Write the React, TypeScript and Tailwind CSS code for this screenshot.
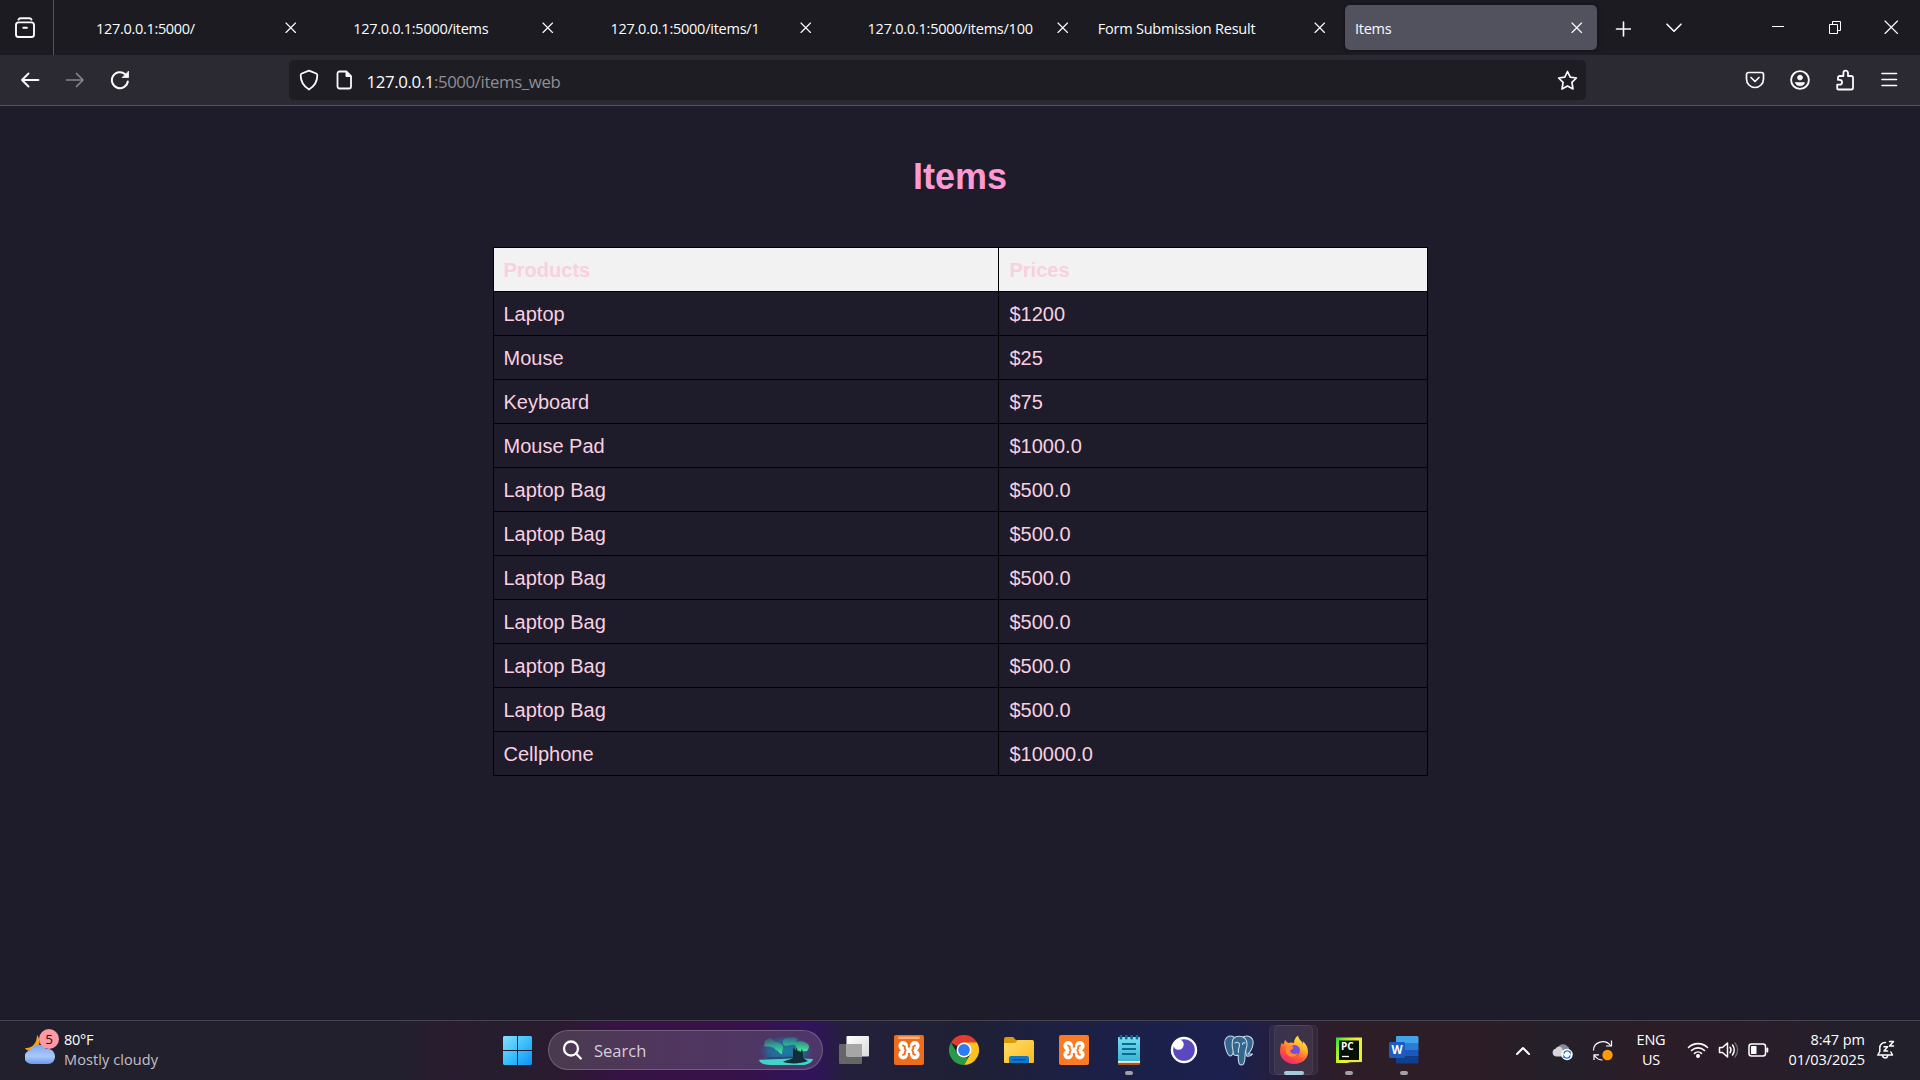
import type { ReactNode } from "react";

const tabs = [
  { title: "127.0.0.1:5000/", indent: true, tracking: "tracking-[-0.31px]" },
  { title: "127.0.0.1:5000/items", indent: true, tracking: "tracking-[-0.28px]" },
  { title: "127.0.0.1:5000/items/1", indent: true, tracking: "tracking-[-0.24px]" },
  { title: "127.0.0.1:5000/items/100", indent: true, tracking: "tracking-[-0.24px]" },
  { title: "Form Submission Result", indent: false, tracking: "tracking-[-0.23px]" },
  { title: "Items", indent: false, active: true, tracking: "tracking-[-0.25px]" },
];

const rows = [
  ["Laptop", "$1200"],
  ["Mouse", "$25"],
  ["Keyboard", "$75"],
  ["Mouse Pad", "$1000.0"],
  ["Laptop Bag", "$500.0"],
  ["Laptop Bag", "$500.0"],
  ["Laptop Bag", "$500.0"],
  ["Laptop Bag", "$500.0"],
  ["Laptop Bag", "$500.0"],
  ["Laptop Bag", "$500.0"],
  ["Cellphone", "$10000.0"],
];

function Glyph({ w = 20, h = 20, sw = 1.6, children }: { w?: number; h?: number; sw?: number; children: ReactNode }) {
  return (
    <svg width={w} height={h} viewBox={`0 0 ${w} ${h}`} fill="none" stroke="currentColor" strokeWidth={sw} strokeLinecap="round" strokeLinejoin="round" className="shrink-0">
      {children}
    </svg>
  );
}

const Cross = ({ s = 9.5 }: { s?: number }) => (
  <Glyph w={s + 2} h={s + 2} sw={1.15}>
    <path d={`M1 1L${s + 1} ${s + 1}M${s + 1} 1L1 ${s + 1}`} />
  </Glyph>
);

function TabStrip() {
  return (
    <div className="flex h-[55px] bg-[#1c1b22]">
      <div className="flex w-[54px] items-center border-r border-[#55545c] pl-[14px] pt-[1px]">
        <Glyph w={22} h={22} sw={1.9}>
          <path d="M4.5 2.6C5 1.6 5.5 1.3 6.5 1.3h9c1 0 1.5.3 2 1.3" />
          <rect x="2" y="5.4" width="18" height="14.6" rx="2.6" />
          <path d="M9.3 10.8h3.6" />
        </Glyph>
      </div>
      <div className="flex pl-[5px] pt-[5px]">
        {tabs.map((t) => (
          <div key={t.title} className="flex w-[257.2px] pr-[5px]">
            <div className={`flex h-[45px] w-full items-center justify-between rounded-[5px] pr-[14.5px] ${t.indent ? "pl-[37px]" : "pl-[10px]"} ${t.active ? "bg-[#52525e] shadow-[0_0_4px_rgba(0,0,0,0.5)]" : ""}`}>
              <span className={`whitespace-nowrap pt-[2px] text-[14.5px] leading-5 ${t.tracking}`}>{t.title}</span>
              <Cross />
            </div>
          </div>
        ))}
      </div>
      <div className="flex flex-1 items-center text-[#fbfbfe]">
        <div className="ml-[13px] mt-[2px]">
          <Glyph w={16} h={16} sw={1.6}><path d="M8.5 1v14M1.500 8h14" /></Glyph>
        </div>
        <div className="ml-[35px]">
          <Glyph w={16} h={10} sw={1.6}><path d="M1 1.2l7 7 7-7" /></Glyph>
        </div>
        <div className="ml-[90px] h-[1px] w-[12px] -translate-y-[1px] bg-white" />
        <div className="ml-[45px]">
          <svg width="13" height="13" fill="none" stroke="#fff" strokeWidth="1">
            <path d="M.5 3.500h8v9h-8zM3.500 3.500v-3h8v9h-3" />
          </svg>
        </div>
        <div className="ml-[42px]"><Cross s={12.5} /></div>
      </div>
    </div>
  );
}

function Toolbar() {
  return (
    <div className="flex h-[51px] items-center border-b border-[#55535f] bg-[#2b2a33] text-[#fbfbfe]">
      <div className="flex w-[289px] items-center gap-[25px] pl-[20px]">
        <Glyph w={20} h={18} sw={1.9}><path d="M18.5 9H2M8.5 2.5L2 9l6.500 6.500" /></Glyph>
        <div className="text-[#85848b]">
          <Glyph w={20} h={18} sw={1.7}><path d="M1.500 9H18M11.500 2.500L18 9l-6.500 6.500" /></Glyph>
        </div>
        <Glyph w={20} h={20} sw={2}>
          <path d="M17.800 11.500a8 8 0 1 1-2.600-7.300" />
          <path d="M18.500 1.500v6h-6z" fill="currentColor" strokeWidth="0.8" />
        </Glyph>
      </div>
      <div className="flex h-[40px] w-[1297px] items-center rounded-[5px] bg-[#1e1d24] pl-[10px]">
        <Glyph w={20} h={22} sw={1.8}>
          <path d="M10 1.600l7.200 2.900c.9.400 1.100.9 1.100 1.800 0 6.500-2.700 10.900-8.300 14.200C4.400 17.200 1.700 12.800 1.700 6.300c0-.9.200-1.400 1.100-1.800z" />
        </Glyph>
        <div className="ml-[17px]">
          <Glyph w={16} h={20} sw={1.8}>
            <path d="M3.500 1.500h6.800l4.700 4.700v10.300a2 2 0 0 1-2 2H3.500a2 2 0 0 1-2-2v-13a2 2 0 0 1 2-2z" />
            <path d="M10 1.500v5h5z" fill="currentColor" strokeWidth="1" />
          </Glyph>
        </div>
        <span className="ml-[14.500px] flex-1 pt-[4px] text-[16.800px] leading-5 tracking-[-0.38px]">
          127.0.0.1<span className="text-[#8f8e95]">:5000/items_web</span>
        </span>
        <div className="mr-[8.500px]">
          <Glyph w={21} h={21} sw={1.7}>
            <path d="M10.500 1.500l2.700 5.700 6.200.8-4.500 4.400 1.100 6.600-5.500-3-5.500 3 1.100-6.600L1.600 8l6.200-.8z" />
          </Glyph>
        </div>
      </div>
      <div className="ml-[159px] flex items-center gap-[25px]">
        <Glyph w={20} h={20} sw={1.7}>
          <path d="M3.500 2.500h13a2 2 0 0 1 2 2V9a8.500 8.500 0 0 1-17 0V4.500a2 2 0 0 1 2-2zM6 7.500l4 4 4-4" />
        </Glyph>
        <Glyph w={20} h={20} sw={1.9}>
          <circle cx="10" cy="10" r="8.900" />
          <circle cx="10" cy="7.600" r="2.500" fill="currentColor" strokeWidth="0.6" />
          <path d="M5.500 12.500h9c0 2-2 3.300-4.500 3.300s-4.500-1.300-4.500-3.300z" fill="currentColor" strokeWidth="0.6" />
        </Glyph>
        <Glyph w={20} h={22} sw={1.8}>
          <path d="M3.500 20.500h12.800a1.700 1.700 0 0 0 1.700-1.700V8.700A1.700 1.700 0 0 0 16.300 7H13V4a2.300 2.300 0 0 0-4.600 0v3H4.700A1.700 1.700 0 0 0 3 8.700v2.100h1.600a2.300 2.300 0 0 1 0 4.900H2.200v3.500c0 .8.500 1.300 1.300 1.300z" />
        </Glyph>
        <Glyph w={18} h={16} sw={1.6}><path d="M2 1.500h14.500M2 7.500h14.500M2 13.500h14.500" /></Glyph>
      </div>
    </div>
  );
}

function Page() {
  return (
    <main className="flex flex-1 flex-col items-center bg-[#1e1b2b] font-['Liberation_Sans',Arial,sans-serif] text-[#f8d0e0]">
      <h1 className="mt-[50px] h-[42px] text-[36px] font-bold leading-[42px] text-[#ff99d1]">Items</h1>
      <table className="mt-[49px] w-[935px] table-fixed border-collapse text-left text-[20px] leading-[23px]">
        <colgroup>
          <col className="w-[505px]" />
          <col />
        </colgroup>
        <thead>
          <tr className="bg-[#f2f2f2]">
            <th className="border border-black px-[10px] pb-[9px] pt-[11px] font-bold">Products</th>
            <th className="border border-black pb-[9px] pl-[11px] pr-[10px] pt-[11px] font-bold">Prices</th>
          </tr>
        </thead>
        <tbody>
          {rows.map(([name, price], i) => (
            <tr key={i}>
              <td className="border border-black px-[10px] pb-[9px] pt-[11px]">{name}</td>
              <td className="border border-black pb-[9px] pl-[11px] pr-[10px] pt-[11px]">{price}</td>
            </tr>
          ))}
        </tbody>
      </table>
    </main>
  );
}

const Weather = () => (
  <svg width="35" height="38" viewBox="0 0 35 38">
    <defs>
      <linearGradient id="cloud" x1="0" y1="0" x2="0" y2="1">
        <stop offset="0" stopColor="#7fa6ee" />
        <stop offset=".6" stopColor="#a9c8fb" />
        <stop offset="1" stopColor="#6c98ea" />
      </linearGradient>
    </defs>
    <path d="M12 6c5 6 2 15-6 16-3 0-5-1-6-3 7 1 12-5 12-13z" fill="#f5a020" />
    <path d="M7 35a7 7 0 0 1-1-14c1-4 5-6 9-5 3 0 5 2 6 4 5-1 9 3 9 7.500S27 35 23 35z" fill="url(#cloud)" />
    <circle cx="24" cy="10" r="10" fill="#ff99a4" />
    <text x="24" y="15" textAnchor="middle" fontSize="13.500" fill="#1a1a1a">5</text>
  </svg>
);

const Windows = () => (
  <svg width="29" height="29" viewBox="0 0 29 29">
    <defs>
      <linearGradient id="win" x1="0" y1="0" x2="1" y2="1">
        <stop offset="0" stopColor="#84e0ff" />
        <stop offset=".5" stopColor="#3cc0fb" />
        <stop offset="1" stopColor="#0c90f5" />
      </linearGradient>
    </defs>
    <path fill="url(#win)" d="M1 0h13v14H0V1zM15 0h13l1 1v13H15zM0 15h14v14H1l-1-1zM15 15h14v13l-1 1H15z" />
  </svg>
);

const Aurora = () => (
  <svg width="56" height="31" viewBox="0 0 56 31">
    <defs>
      <radialGradient id="sky">
        <stop offset="0" stopColor="#1c7fa0" />
        <stop offset=".65" stopColor="#2a6296" />
        <stop offset="1" stopColor="#4b3f7c" stopOpacity="0" />
      </radialGradient>
      <linearGradient id="aur" x1="0" y1="0" x2="0" y2="1">
        <stop offset="0" stopColor="#1fa88c" stopOpacity=".3" />
        <stop offset="1" stopColor="#4df09a" />
      </linearGradient>
    </defs>
    <ellipse cx="28" cy="16" rx="28" ry="16" fill="url(#sky)" />
    <path d="M9 4c4-2 6 1 8 3 4 0 6 2 8 4 0 3-1 6-1 8-2 0-3-3-6-4-2-2-3-3-5-3-2-1-5 0-7-1 1-3 0-5 3-7z" fill="url(#aur)" />
    <path d="M26 4c4-2 9-3 13-1 1 2-1 3-1 4 4-2 12 0 13 4 0 2-1 4-2 5-3 0-6 1-9 0-2 0-3-2-2-5-2-2-4-1-6-1-3 1-6 1-7-1 0-2 0-4 1-5z" fill="url(#aur)" />
    <path d="M1 25c14-4 40-3 54-1-1 4-6 6-12 6H12C6 30 2 28 1 25z" fill="#43d4c9" />
    <path d="M1 25c10-3 15-4 25-3 10-1 20 0 29 2-16-1-32 0-54 1z" fill="#254c75" />
    <path d="M25 27c5-3 8-2 10-4v-8l1-3 1.500 4 1-4 1.500 5 1-2 1 3 2-4 1 4v5c2 1 3 2 5 3-7 3-19 3-25 1z" fill="#102d38" />
  </svg>
);

const TaskView = () => (
  <svg width="30" height="30" viewBox="0 0 30 30">
    <defs>
      <linearGradient id="tv" x1="0" y1="0" x2="1" y2="1"><stop stopColor="#fff" /><stop offset="1" stopColor="#dadada" /></linearGradient>
    </defs>
    <rect x="0" y="9" width="23" height="20" rx="1" fill="#666" />
    <rect x="7.500" y="1" width="22.500" height="20.500" rx="1" fill="url(#tv)" />
    <path d="M7.500 9H23v12.500H8.500l-1-1z" fill="#a6a6a6" />
  </svg>
);

const Xampp = ({ shaded = false }: { shaded?: boolean }) => {
  const orange = shaded ? "#ee6d1c" : "#fb7a24";
  return (
    <svg width="30" height="30" viewBox="0 0 30 30">
      <rect width="30" height="30" rx="2" fill={orange} />
      {shaded && <rect x="4" y="1.500" width="22" height="2.500" rx="1.200" fill="#ffb27c" />}
      <g fill="#fff">
        <circle cx="9.200" cy="10.800" r="4.800" />
        <circle cx="20.800" cy="10.800" r="4.800" />
        <circle cx="9.200" cy="19.600" r="4.800" />
        <circle cx="20.800" cy="19.600" r="4.800" />
        <path d="M7.500 12.500H22.500L21 15.200l1.500 2.800h-15L9 15.200z" />
      </g>
      <g fill="none" stroke={orange} strokeWidth="1.800" strokeLinecap="round" strokeLinejoin="round">
        <path d="M9 10.500l1.800 1v2.200l1 1.500-1 1.500v2.200l-1.800 1" />
        <path d="M21 10.500l-1.800 1v2.200l-1 1.500 1 1.500v2.200l1.800 1" />
      </g>
    </svg>
  );
};

const Chrome = () => (
  <svg width="30" height="30" viewBox="0 0 30 30">
    <path d="M15 15L2 7.500A15 15 0 0 1 28 7.500z" fill="#e33b2e" />
    <path d="M15 7.500h13A15 15 0 0 1 15 30l6.500-11.300z" fill="#fcc31e" />
    <path d="M2 7.500l6.500 11.200L15 22.500h4.300L15 30A15 15 0 0 1 2 7.500z" fill="#2b9a48" />
    <circle cx="15" cy="15" r="7.500" fill="#fff" />
    <circle cx="15" cy="15" r="5.900" fill="#2f7cf0" />
  </svg>
);

const Folder = () => (
  <svg width="30" height="30" viewBox="0 0 30 30">
    <defs><linearGradient id="fold" x1="0" y1="0" x2="1" y2="1"><stop stopColor="#ffdf6a" /><stop offset="1" stopColor="#fbb91f" /></linearGradient></defs>
    <path d="M0 4q0-2 2-2h7l3 3h17v8H0z" fill="#dc9a0b" />
    <path d="M0 8h11l3-3h14q2 0 2 2v20q0 1-1 1H1q-1 0-1-1z" fill="url(#fold)" />
    <path d="M5 28v-5q0-2 2-2h16q2 0 2 2v5z" fill="#0f78c8" />
    <path d="M8.500 24.700h13" stroke="#0a4f96" strokeWidth="1.400" />
  </svg>
);

const Notepad = () => (
  <svg width="24" height="30" viewBox="0 0 24 30">
    <defs><linearGradient id="note" x1="0" y1="0" x2="0" y2="1"><stop stopColor="#7adcf0" /><stop offset="1" stopColor="#38b4d4" /></linearGradient></defs>
    <rect x="1" y="22" width="22" height="8" rx="1" fill="#b4590f" />
    <rect x="1" y="20" width="22" height="7.800" fill="#f4f4f4" />
    <path d="M1 2h22v24H1z" fill="url(#note)" />
    <path d="M5 9h14M5 14h14M5 19h14" stroke="#086d8e" strokeWidth="1.900" />
    <path d="M4 .8v2.400M9.300.8v2.400M14.600.8v2.400M20 .8v2.400" stroke="#086d8e" strokeWidth="2.600" strokeLinecap="round" />
  </svg>
);

const Insomnia = () => (
  <svg width="30" height="30" viewBox="0 0 30 30">
    <circle cx="15" cy="15" r="12" fill="#5849be" stroke="#fff" strokeWidth="2.400" />
    <circle cx="9.500" cy="9.500" r="5.200" fill="#fff" />
  </svg>
);

const Postgres = () => (
  <svg width="30" height="31" viewBox="0 0 30 31" fill="#336791" stroke="#c9d8e3" strokeWidth="1.100" strokeLinejoin="round" strokeLinecap="round">
    <path d="M10 2C5-.5 0 2.500.8 9c.6 5 3 12 5.500 12 1.500 0 2-1.500 3-3z" />
    <path d="M19 2c5-2.500 11 0 10 7-.5 4-3 8-5 10h4.500c-1 2-3 2.500-6 2z" />
    <path d="M9.500 3.500C12 .5 18 .5 21 3.500c2.500 3 2.500 7 1 11-.7 2-1 4-1 6.500 0 6-1 9-3.500 9-3 0-3.200-3-3.300-10-2 1-5 .5-5-2 0-3-1-5-1-8s0-5 1.300-6.500z" />
    <path d="M11 8c2.500-1.500 4.500-.5 4.500 2 0 3-2 4-1 7.500M21 8c-1.500-.8-2.500 0-2.500 1.500" fill="none" />
  </svg>
);

const Firefox = () => (
  <svg width="30" height="30" viewBox="0 0 30 30">
    <defs>
      <linearGradient id="fx" x1=".8" y1="0" x2=".25" y2="1">
        <stop offset="0" stopColor="#fff04a" />
        <stop offset=".35" stopColor="#ffb52a" />
        <stop offset=".65" stopColor="#ff5a36" />
        <stop offset="1" stopColor="#ee207b" />
      </linearGradient>
    </defs>
    <path d="M2.500 8l2 1.500L6 5l3 3c2-.7 4-.7 6 0 0-3 1.500-6 4-7.500.5 3 2 4 3.500 6L24 9c0-1 0-2-.5-3 4 3 5.500 7 5.500 11 0 7-6 12-14 12S1 23 1 17c0-4 .5-6 1.500-9z" fill="url(#fx)" />
    <circle cx="15.500" cy="15.500" r="5.500" fill="#7a4be0" />
    <path d="M7 12c4-1.500 7-1 7.500.8-.5 2-3 1.500-3.500 3.200 1 3 5 4 8 2-2 5.500-11 4.500-12-.5-.5-2-.5-3.500 0-5.500z" fill="#ff8a2c" />
  </svg>
);

const PyCharm = () => (
  <svg width="28" height="28" viewBox="0 0 28 28">
    <defs><linearGradient id="pc" x1="0" y1="0" x2="1" y2=".6"><stop stopColor="#21d750" /><stop offset=".25" stopColor="#8cf025" /><stop offset=".6" stopColor="#f3ee30" /><stop offset="1" stopColor="#e6f032" /></linearGradient></defs>
    <path d="M1 1.500h26v24.500l-12 .3-3 .7H1z" fill="url(#pc)" />
    <rect x="4" y="4.500" width="20" height="19.500" fill="#061007" />
    <text x="6" y="14" fontSize="10" fontWeight="700" fill="#fff">PC</text>
    <path d="M7 20.500h7" stroke="#fff" strokeWidth="1.300" />
  </svg>
);

const Word = () => (
  <svg width="30" height="28" viewBox="0 0 30 28">
    <path d="M8 0h20q1.500 0 1.500 1.500V7H7V1q0-1 1-1z" fill="#41a5ee" />
    <path d="M7 7h22.500v7H7z" fill="#2b7cd3" />
    <path d="M7 14h22.500v6.500H7z" fill="#185abd" />
    <path d="M7 20.500h22.500V26q0 1.500-1.500 1.500H8q-1 0-1-1z" fill="#103f91" />
    <rect x="0" y="6" width="16" height="16" rx="1.200" fill="#1b5cbe" />
    <text x="8" y="18" fontSize="11.500" fontWeight="700" fill="#fff" textAnchor="middle">W</text>
  </svg>
);

const apps: { icon: ReactNode; mark?: "open" | "active" }[] = [
  { icon: <TaskView /> },
  { icon: <Xampp shaded /> },
  { icon: <Chrome /> },
  { icon: <Folder /> },
  { icon: <Xampp /> },
  { icon: <Notepad />, mark: "open" },
  { icon: <Insomnia /> },
  { icon: <Postgres /> },
  { icon: <Firefox />, mark: "active" },
  { icon: <PyCharm />, mark: "open" },
  { icon: <Word />, mark: "open" },
];

function Taskbar() {
  return (
    <footer className="flex h-[60px] items-center border-t border-[#47434f] bg-[linear-gradient(90deg,#22202c_0px,#23202e_400px,#2a1c30_450px,#251e2e_500px,#2c1a30_560px,#361344_620px,#37124a_740px,#30145a_815px,#24203c_845px,#1f2035_960px,#1c2048_1110px,#1b204e_1230px,#261e3c_1280px,#2e1d28_1340px,#2c1d26_1480px,#24202a_1560px,#2b1d28_1640px,#2a1d2a_1740px,#22202b_1860px,#22202b_1920px)] pb-[1px]">
      <div className="flex w-[503px] items-center pl-[25px]">
        <div className="-mt-[5px]"><Weather /></div>
        <div className="ml-[4px] text-[14.500px] leading-[20px]">
          <div className="tracking-[-0.3px] text-white">80°F</div>
          <div className="tracking-[0.1px] text-[#c3c1c8]">Mostly cloudy</div>
        </div>
      </div>
      <Windows />
      <div className="ml-[16px] flex h-[40px] w-[275px] items-center rounded-full border border-white/20 bg-[linear-gradient(90deg,#4a3a4e,#50365f_45%,#4d3668)] pl-[13px] pr-[8px]">
        <Glyph w={20} h={20} sw={2.300}>
          <circle cx="9" cy="8.500" r="7" />
          <path d="M14 13.500l4.800 5" />
        </Glyph>
        <span className="ml-[12px] flex-1 pt-[1px] text-[16.500px] leading-5 text-[#d6cfda]">Search</span>
        <Aurora />
      </div>
      <div className="ml-[3px] flex">
        {apps.map((a, i) => (
          <div key={i} className="relative flex h-[58px] w-[55px] items-center justify-center">
            {a.mark === "active" && (
              <>
                <div className="absolute left-[8px] top-[4px] h-[50px] w-[44px] rounded-[5px] border border-white/5 bg-white/5" />
                <div className="absolute left-[3px] top-[4px] h-[50px] w-[44px] rounded-[5px] border border-white/5 bg-white/5" />
              </>
            )}
            <div className="relative">{a.icon}</div>
            {a.mark === "open" && <div className="absolute bottom-[4px] left-[23.500px] h-[4px] w-[8px] rounded-full bg-[#a29fac]" />}
            {a.mark === "active" && <div className="absolute bottom-[4px] left-[17.500px] h-[4px] w-[20px] rounded-full bg-[#a3cbdc]" />}
          </div>
        ))}
      </div>
      <div className="flex flex-1 items-center justify-end pr-[25px] text-white">
        <Glyph w={14} h={9} sw={2}><path d="M1 8l6-6 6 6" /></Glyph>
        <svg width="21" height="18" viewBox="0 0 21 18" className="ml-[22px] mt-[3px]">
          <path d="M6 5a5.500 5.500 0 0 1 10-1c2 .5 1.500 5 0 7H8z" fill="#8d8b92" />
          <path d="M4 13.500a4 4 0 0 1-.5-7.800C6 2.500 9 3 11 7v6.500z" fill="#d5d4d8" />
          <circle cx="15" cy="11.500" r="5.700" fill="#fff" />
          <path d="M11.800 10.500a3.400 3.400 0 0 1 6.200-1v-1.500M18.200 12.500a3.400 3.400 0 0 1-6.200 1v1.500" fill="none" stroke="#1877d2" strokeWidth="1.400" />
        </svg>
        <svg width="22" height="21" viewBox="0 0 22 21" className="ml-[19px]" fill="none" stroke="#fff" strokeWidth="1.200">
          <path d="M1.500 10.500C1.500 2 13 -1.500 18.500 5.500M19.500 .5v5.500h-5.500M7 14.800H2V20M2.500 15.500c2 3 5 4.500 8 4.500" />
          <circle cx="15.500" cy="15" r="5.200" fill="#ff9a0c" stroke="none" />
        </svg>
        <div className="ml-[19px] w-[36px] text-center text-[14.500px] leading-[20px] tracking-[-0.2px]">
          <div>ENG</div>
          <div>US</div>
        </div>
        <div className="ml-[18px] flex items-center gap-[9px]">
          <Glyph w={22} h={18} sw={1.600}>
            <path d="M1.500 6.500a13.500 13.500 0 0 1 19 0M4.500 9.500a9.300 9.300 0 0 1 13 0M7.500 12.400a5 5 0 0 1 7 0" />
            <circle cx="11" cy="15" r="1.200" fill="currentColor" />
          </Glyph>
          <Glyph w={21} h={18} sw={1.500}>
            <path d="M1.500 6.500v5h3l5 4.500V2L4.500 6.500zM12 6.300c1.200 1.600 1.200 3.800 0 5.400M14.500 4c2.300 2.800 2.300 7.200 0 10" />
            <path d="M17 2c3.500 4 3.500 10 0 14" stroke="#6b6670" />
          </Glyph>
          <Glyph w={21} h={16} sw={1.500}>
            <rect x="1" y="2" width="16.500" height="12" rx="2.500" />
            <rect x="3" y="4" width="5.500" height="8" rx="0.500" fill="currentColor" stroke="none" />
            <path d="M19.300 6.500v3" strokeWidth="2" />
          </Glyph>
        </div>
        <div className="ml-[18px] w-[78px] whitespace-nowrap text-right text-[14.500px] leading-[20px] tracking-[-0.05px]">
          <div>8:47 pm</div>
          <div>01/03/2025</div>
        </div>
        <div className="ml-[11px]">
          <Glyph w={19} h={20} sw={1.500}>
            <path d="M9.500 2.500C6 2.300 3.800 4.800 3.800 8v3.500L1.800 15h14.700l-1.600-3M6.500 16c.8 2.600 4.500 2.600 5.200 0M13.500 1.500h4l-4 4.500h4M8 6.800h3.600L8 11h3.600" />
          </Glyph>
        </div>
      </div>
    </footer>
  );
}

export default function App() {
  return (
    <div className="flex h-screen w-[1920px] flex-col overflow-hidden font-['Open_Sans','Noto_Sans',sans-serif] text-[#fbfbfe]">
      <TabStrip />
      <Toolbar />
      <Page />
      <Taskbar />
    </div>
  );
}
